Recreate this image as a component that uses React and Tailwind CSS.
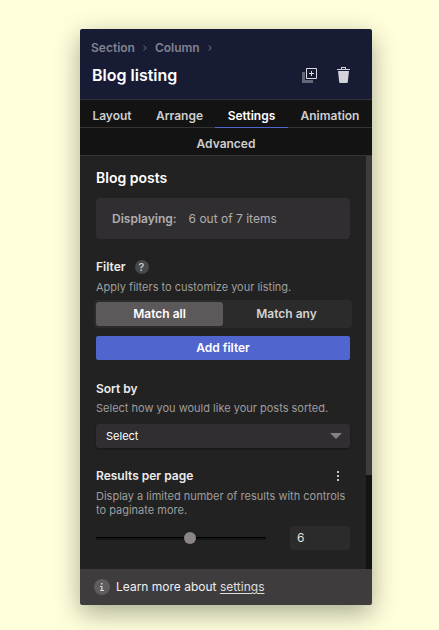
import { useState } from 'react'

const CRUMBS = ['Section', 'Column']

const TABS = [
  { name: 'Layout', width: 'w-16' },
  { name: 'Arrange', width: 'w-[71px]' },
  { name: 'Settings', width: 'w-[73px]' },
  { name: 'Animation', width: 'w-[84px]' },
]

const Chevron = () => (
  <svg width="4" height="6" viewBox="0 0 4 6" fill="none" stroke="#777987">
    <path d="M0.7 0.5 L3.2 3 L0.7 5.5" />
  </svg>
)

const Header = () => (
  <div className="h-[70px] bg-[#181b34]">
    <div className="flex items-center h-[38px] pl-[11px] text-[12px] font-semibold text-[#81838f]">
      {CRUMBS.map(c => (
        <div key={c} className="flex items-center">
          <span>{c}</span>
          <span className="ml-2 mr-2"><Chevron /></span>
        </div>
      ))}
    </div>

    <div className="flex items-center h-4 pl-3 pr-[22px]">
      <h1 className="text-[16px] leading-4 font-semibold text-white grow">Blog listing</h1>
      <button type="button" aria-label="Duplicate">
        <svg width="15" height="16" viewBox="0 0 15 16" fill="none">
          <path d="M0 5h3v8h8v3h-11z" fill="#656778" />
          <path d="M4.500 1.500h10v10h-10z" stroke="#dcdce2" />
          <path d="M9.500 4v5M7 6.500h5" stroke="#dcdce2" />
        </svg>
      </button>
      <button type="button" aria-label="Delete" className="ml-5">
        <svg width="13" height="16" viewBox="0 0 13 16" fill="#d3d3da">
          <path d="M4 2V0h5v2h4v1H0V2zM5 1v1h3V1z" fillRule="evenodd" />
          <path d="M1 4h11l-1.200 11q-.1 1-1 1H3.200q-.9 0-1-1z" />
        </svg>
      </button>
    </div>
  </div>
)

const Tabs = ({ active, onChange }) => (
  <div className="bg-[#131313] border-y border-[#343434] text-[12px] font-semibold text-[#cecece]">
    <div className="flex justify-center h-7 border-b border-[#343434]">
      {TABS.map(t => (
        <button
          key={t.name}
          type="button"
          onClick={() => onChange(t.name)}
          className={`h-7 pt-1 border-b ${t.width} ${
            active === t.name ? 'text-white border-[#5165ce]' : 'border-[#343434]'
          }`}
        >
          {t.name}
        </button>
      ))}
    </div>
    <button type="button" onClick={() => onChange('Advanced')} className="block w-full h-[27px] pt-1">
      Advanced
    </button>
  </div>
)

const App = () => {
  const [tab, setTab] = useState('Settings')
  const [match, setMatch] = useState('all')

  return (
    <div className="h-[630px] bg-[#ffffdc] pt-[29px] pl-20 font-['Inter',sans-serif]">
      <div className="w-[292px] h-[576px] flex flex-col rounded-[2px] overflow-hidden shadow-[0_8px_26px_rgba(0,0,0,0.34)]">
        <Header />
        <Tabs active={tab} onChange={setTab} />

        <div className="flex h-[413px]">
          <div className="w-[286px] bg-[#222222] pl-4 pr-4">
            <h2 className="mt-[13px] text-[14px] leading-[18px] font-semibold text-white">Blog posts</h2>

            <div className="mt-[11px] h-[41px] flex items-center rounded bg-[#312e31] pl-4 text-[12px] text-[#b0aeb0]">
              <span className="font-semibold">Displaying:</span>
              <span className="ml-3">6 out of 7 items</span>
            </div>

            {/* Filter */}
            <div className="mt-5 h-4 flex items-center text-[12px]">
              <h3 className="font-semibold text-[#ececec]">Filter</h3>
              <span className="ml-[9px] size-[14px] rounded-full bg-[#484848] text-[#cfcfcf] text-[11px] leading-[14px] font-medium text-center">?</span>
            </div>
            <p className="mt-[5px] text-[11px] leading-[14px] text-[#9e9e9e]">Apply filters to customize your listing.</p>

            <div className="-mx-0.5 mt-[6px] h-7 p-0.5 flex rounded bg-[#2b2b2b] text-[12px] font-semibold">
              <button
                type="button"
                onClick={() => setMatch('all')}
                className={`w-[127px] rounded-[3px] ${match === 'all' ? 'bg-[#5d585a] text-white' : 'text-[#d2d2d2]'}`}
              >
                Match all
              </button>
              <button
                type="button"
                onClick={() => setMatch('any')}
                className={`w-[127px] rounded-[3px] ${match === 'any' ? 'bg-[#5d585a] text-white' : 'text-[#d2d2d2]'}`}
              >
                Match any
              </button>
            </div>
            <button type="button" className="mt-2 block w-full h-6 rounded-[2px] bg-[#5165ce] text-[12px] font-semibold text-white">
              Add filter
            </button>

            {/* Sort */}
            <h3 className="mt-[21px] text-[12px] leading-4 font-semibold text-[#ececec]">Sort by</h3>
            <p className="mt-1 text-[11px] leading-[14px] text-[#9e9e9e]">Select how you would like your posts sorted.</p>
            <button type="button" className="mt-[9px] w-full h-6 flex items-center justify-between rounded-[3px] bg-[#312e31] pl-2.5 pr-2 text-[11px] text-white shadow-[0_1px_2px_rgba(0,0,0,0.4)]">
              Select
              <svg width="12" height="6" viewBox="0 0 12 6" fill="#858184">
                <path d="M0 0h12L6 6z" />
              </svg>
            </button>

            {/* Pagination */}
            <div className="mt-5 h-4 flex items-center justify-between pr-[11px]">
              <h3 className="text-[12px] leading-4 font-semibold text-[#ececec]">Results per page</h3>
              <svg width="2" height="10" fill="#c4c4c4">
                <path d="M0 0h2v2H0zM0 4h2v2H0zM0 8h2v2H0z" />
              </svg>
            </div>
            <p className="mt-[5px] text-[11px] leading-[14px] text-[#9e9e9e]">
              Display a limited number of results with controls<br />to paginate more.
            </p>
            <div className="mt-[9px] flex items-center justify-between h-6">
              <div className="w-[170px] h-[3px] flex items-center bg-[#151515] border-t border-black">
                <span className="ml-[88px] mb-0.5 size-3 shrink-0 rounded-full bg-[#8b8488]" />
              </div>
              <div className="w-[60px] h-6 pl-[7px] rounded-[3px] bg-[#2b2b2b] text-[12px] leading-6 text-[#e0e0e0]">6</div>
            </div>
          </div>

          {/* Scrollbar */}
          <div className="w-1.5 bg-[#131313]">
            <div className="h-[319px] bg-[#3f3c3e]" />
          </div>
        </div>

        <div className="h-9 flex items-center bg-[#3f3c3e] pl-3.5 text-[12px] text-[#efefef]">
          <span className="size-4 mr-1.5 flex items-center justify-center rounded-full bg-[#605d5f]">
            <svg width="4" height="8" viewBox="0 0 4 8" fill="#d5d5d5">
              <path d="M1 0h1.500v1.500H1zM0 3h2.500v4H4v1H0V7h1.200V4H0z" />
            </svg>
          </span>
          <span>Learn more about <a href="#" className="underline underline-offset-2 text-[#dedede]">settings</a></span>
        </div>
      </div>
    </div>
  )
}

export default App
